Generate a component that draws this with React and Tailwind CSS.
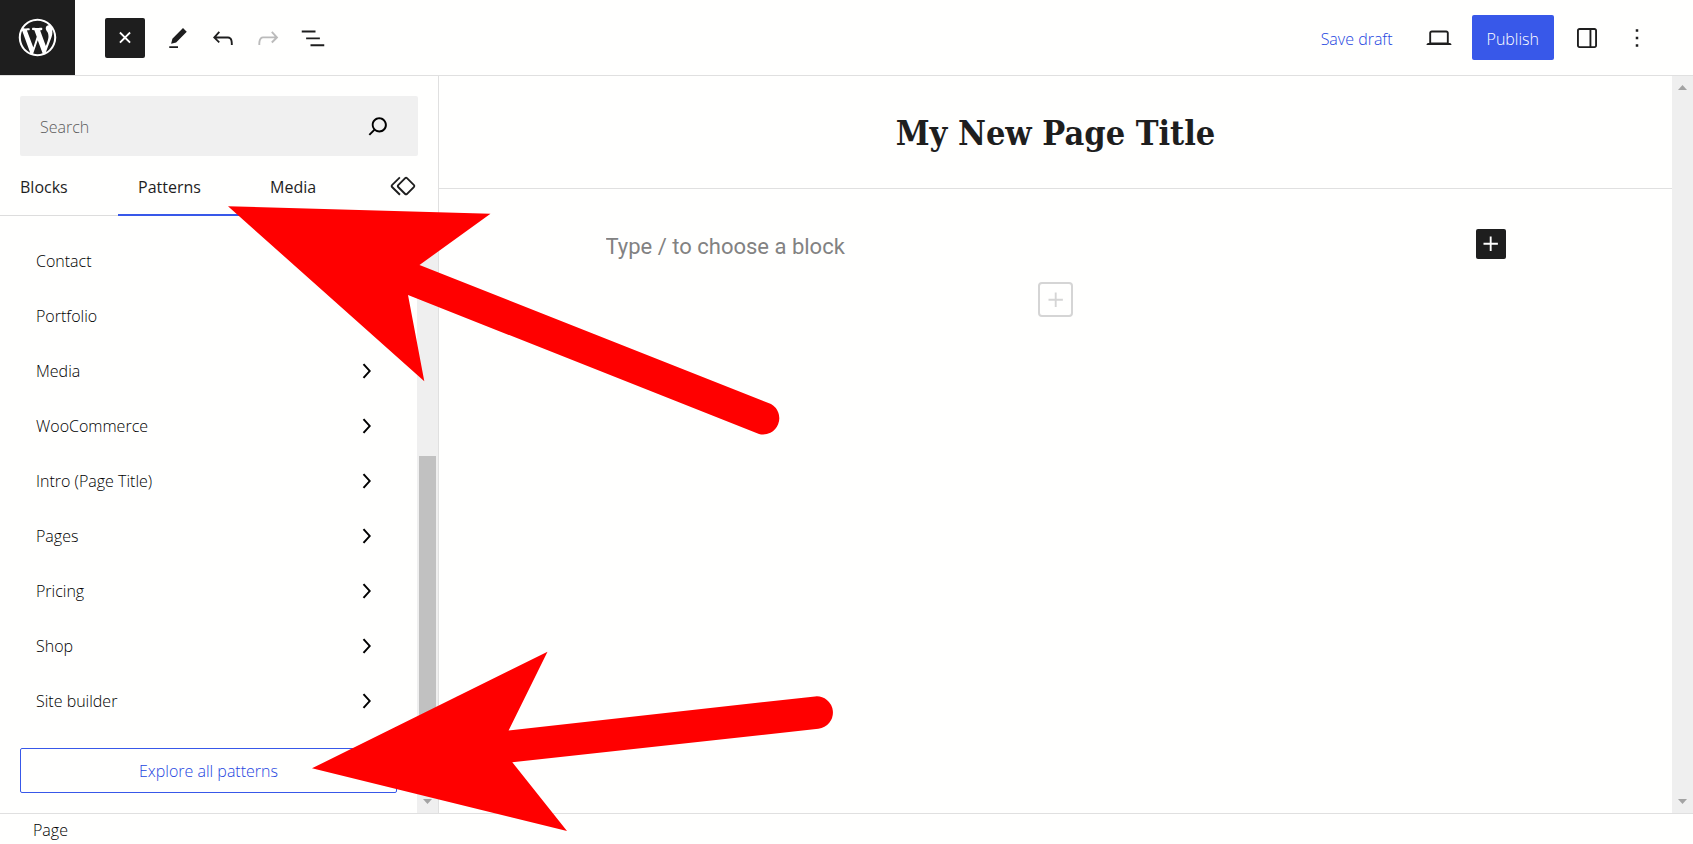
import React from "react";

const PATHS = {
  plus: "M11 12.5V17.5H12.5V12.5H17.5V11H12.5V6H11V11H6V12.5H11Z",
  pencil: "m19 7-3-3-8.5 8.5-1 4 4-1L19 7Zm-7 11.5H5V20h7v-1.5Z",
  undo: "M18.3 11.7c-.6-.6-1.4-.9-2.3-.9H6.7l2.9-3.3-1.1-1-4.5 5L8.5 16l1-1-2.7-2.7H16c.5 0 .9.2 1.3.5 1 1 1 3.4 1 4.5v.3h1.5v-.2c0-1.5 0-4.3-1.5-5.7z",
  redo: "M15.6 6.5l-1.1 1 2.9 3.3H8c-.9 0-1.7.3-2.3.9-1.4 1.5-1.4 4.2-1.4 5.6v.2h1.5v-.3c0-1.1 0-3.5 1-4.5.3-.3.7-.5 1.3-.5h9.2L14.5 15l1.1 1.1 4.6-4.6-4.6-5z",
  listView: "M3 6h11v1.5H3V6Zm3.5 5.5h11V13h-11v-1.5ZM21 17H10v1.5h11V17Z",
  search: "M13 5c-3.3 0-6 2.7-6 6 0 1.4.5 2.7 1.3 3.7l-3.8 3.8 1.1 1.1 3.8-3.8c1 .8 2.3 1.3 3.7 1.3 3.3 0 6-2.7 6-6S16.3 5 13 5zm0 10.5c-2.5 0-4.5-2-4.5-4.5s2-4.5 4.5-4.5 4.5 2 4.5 4.5-2 4.5-4.5 4.5z",
  symbol: "M21.3 10.8l-5.6-5.6c-.7-.7-1.8-.7-2.5 0l-5.6 5.6c-.7.7-.7 1.8 0 2.5l5.6 5.6c.3.3.8.5 1.2.5s.9-.2 1.2-.5l5.6-5.6c.8-.7.8-1.9.1-2.5zm-1 1.4l-5.6 5.6c-.1.1-.3.1-.4 0l-5.6-5.6c-.1-.1-.1-.3 0-.4l5.6-5.6s.1-.1.2-.1.1 0 .2.1l5.6 5.6c.1.1.1.3 0 .4zm-16.6-.4L10 5.5l-1-1-6.3 6.3c-.7.7-.7 1.8 0 2.5L9 19.5l1.1-1.1-6.3-6.3c-.2 0-.2-.2-.1-.3z",
  laptop: "M20.5 16h-.7V8c0-1.1-.9-2-2-2H6.2c-1.1 0-2 .9-2 2v8h-.7c-.8 0-1.5.7-1.5 1.5h20c0-.8-.7-1.5-1.5-1.5zM5.7 8c0-.3.2-.5.5-.5h11.6c.3 0 .5.2.5.5v7.6H5.7V8z",
  drawer: "M18 4H6c-1.1 0-2 .9-2 2v12c0 1.1.9 2 2 2h12c1.1 0 2-.9 2-2V6c0-1.1-.9-2-2-2zm-4 14.5H6c-.3 0-.5-.2-.5-.5V6c0-.3.2-.5.5-.5h8v13zm4.5-.5c0 .3-.2.5-.5.5h-2.5v-13H18c.3 0 .5.2.5.5v12z",
  more: "M13 19h-2v-2h2v2zm0-6h-2v-2h2v2zm0-6h-2V5h2v2z",
  chevron: "M10.6 6L9.4 7l4.6 5-4.6 5 1.2 1 5.4-6z",
  wordpress: "M20 10c0-5.51-4.49-10-10-10C4.48 0 0 4.49 0 10c0 5.52 4.48 10 10 10 5.51 0 10-4.48 10-10zM7.78 15.37L4.37 6.22c.55-.02 1.17-.08 1.17-.08.5-.06.44-1.13-.06-1.11 0 0-1.45.11-2.37.11-.18 0-.37 0-.58-.01C4.12 2.69 6.87 1.11 10 1.11c2.33 0 4.45.87 6.05 2.34-.68-.11-1.65.39-1.65 1.58 0 .74.45 1.36.9 2.1.35.61.55 1.36.55 2.46 0 1.49-1.4 5-1.4 5l-3.03-8.37c.54-.02.82-.17.82-.17.5-.05.44-1.25-.06-1.22 0 0-1.44.12-2.38.12-.87 0-2.33-.12-2.33-.12-.5-.03-.56 1.2-.06 1.22l.92.08 1.26 3.41zM17.41 10c.24-.64.74-1.87.43-4.25.7 1.29 1.05 2.71 1.05 4.25 0 3.29-1.73 6.24-4.4 7.78.97-2.59 1.94-5.2 2.92-7.78zM6.1 18.09C3.12 16.65 1.11 13.53 1.11 10c0-1.3.23-2.48.72-3.59C3.25 10.3 4.67 14.2 6.1 18.09zm4.03-6.63l2.58 6.98c-.86.29-1.76.45-2.71.45-.79 0-1.57-.11-2.29-.33.81-2.38 1.62-4.74 2.42-7.1z",
};

function Icon({ name, className = "size-[30px]", viewBox = "0 0 24 24" }) {
  return (
    <svg viewBox={viewBox} fill="currentColor" aria-hidden="true" className={`shrink-0 ${className}`}>
      <path d={PATHS[name]} />
    </svg>
  );
}

function IconButton({ name, label, className = "w-[45px]", disabled = false }) {
  return (
    <button
      type="button"
      aria-label={label}
      disabled={disabled}
      className={`flex h-[45px] shrink-0 items-center justify-center disabled:text-[#bbbbbb] ${className}`}
    >
      <Icon name={name} />
    </button>
  );
}

function Header() {
  return (
    <header className="flex h-[76px] shrink-0 items-center justify-between border-b border-[#e0e0e0]">
      <div className="flex h-full items-center">
        <a href="#dashboard" aria-label="View Pages" className="flex size-[75px] items-center justify-center self-start bg-[#1e1e1e] text-white">
          <Icon name="wordpress" viewBox="-2 -2 24 24" className="size-[45px]" />
        </a>
        <button type="button" aria-label="Close block inserter" className="mr-[10px] ml-[30px] flex size-10 items-center justify-center rounded-[2px] bg-[#1e1e1e] text-white">
          <Icon name="plus" className="size-[30px] rotate-45" />
        </button>
        <IconButton name="pencil" label="Tools" />
        <IconButton name="undo" label="Undo" />
        <IconButton name="redo" label="Redo" disabled />
        <IconButton name="listView" label="Document overview" />
      </div>
      <div className="flex items-center gap-[10px] pr-[34px]">
        <button type="button" className="px-[14px] pt-[2px] text-base font-light text-[#2445e0]">Save draft</button>
        <IconButton name="laptop" label="Preview" />
        <button type="button" className="h-[45px] rounded-[2px] bg-[#3858e9] px-[15px] pt-[2px] text-base font-light text-white">Publish</button>
        <div className="flex items-center gap-[5px]">
          <IconButton name="drawer" label="Settings" />
          <IconButton name="more" label="Options" />
        </div>
      </div>
    </header>
  );
}

function ScrollArrow({ up = false }) {
  return (
    <svg viewBox="0 0 9 5" aria-hidden="true" className="h-[5px] w-[9px]" fill="#a3a3a3">
      <path d={up ? "M4.5 0L9 5H0z" : "M0 0h9L4.5 5z"} />
    </svg>
  );
}

function ScrollTrack({ children }) {
  return (
    <div aria-hidden="true" className="flex w-[21px] shrink-0 flex-col items-center justify-between bg-[#efefef] py-[9px]">
      <ScrollArrow up />
      {children}
      <ScrollArrow />
    </div>
  );
}

const CATEGORIES = [
  { label: "Contact", nested: false },
  { label: "Portfolio", nested: false },
  { label: "Media", nested: true },
  { label: "WooCommerce", nested: true },
  { label: "Intro (Page Title)", nested: true },
  { label: "Pages", nested: true },
  { label: "Pricing", nested: true },
  { label: "Shop", nested: true },
  { label: "Site builder", nested: true },
];

function Inserter() {
  return (
    <aside className="flex w-[439px] shrink-0 flex-col border-r border-[#e0e0e0]">
      <div className="px-5 pt-5">
        <div className="flex h-[60px] items-center rounded-[2px] bg-[#f0f0f0] pr-[25px] pl-5">
          <input type="text" aria-label="Search for blocks and patterns" placeholder="Search" className="h-full min-w-0 flex-1 bg-transparent pt-[2px] text-base font-light outline-none placeholder:text-[#5c5c5c]" />
          <button type="button" aria-label="Search" className="text-black">
            <Icon name="search" />
          </button>
        </div>
      </div>
      <div role="tablist" className="flex h-[60px] shrink-0 border-b border-[#dddddd] text-base">
        <button type="button" role="tab" aria-selected="false" className="-mb-px w-[118px] border-b-2 border-transparent px-5 pt-1 text-left">Blocks</button>
        <button type="button" role="tab" aria-selected="true" className="-mb-px w-[132px] border-b-2 border-[#3858e9] px-5 pt-1 text-left">Patterns</button>
        <button type="button" role="tab" aria-selected="false" className="-mb-px w-[118px] border-b-2 border-transparent px-5 pt-1 text-left">Media</button>
        <button type="button" role="tab" aria-selected="false" aria-label="Synced patterns" className="flex flex-1 items-center justify-center">
          <Icon name="symbol" />
        </button>
      </div>
      <div className="flex min-h-0 flex-1">
        <div className="flex min-w-0 flex-1 flex-col gap-5 overflow-hidden pt-[17px] pr-5 pl-5">
          <ul>
            {CATEGORIES.map((c) => (
              <li key={c.label}>
                <button type="button" className="flex h-[55px] w-full items-center justify-between pr-4 pl-4 text-left text-base font-light text-black">
                  <span>{c.label}</span>
                  {c.nested && <Icon name="chevron" />}
                </button>
              </li>
            ))}
          </ul>
          <button type="button" className="h-[45px] shrink-0 rounded-[2px] border border-[#3858e9] text-base font-light text-[#2445e0]">
            Explore all patterns
          </button>
        </div>
        <ScrollTrack>
          <div className="mt-auto mb-3 h-[331px] w-[17px] bg-[#c1c1c1]" />
        </ScrollTrack>
      </div>
    </aside>
  );
}

function Canvas() {
  return (
    <main className="flex min-w-0 flex-1">
      <div className="flex min-w-0 flex-1 flex-col">
        <div className="flex h-[113px] items-center justify-center border-b border-[#e0e0e0] pt-[2px]">
          <h1 className="font-['DejaVu_Serif_Condensed','DejaVu_Serif',serif] text-[34px] leading-10 font-bold">My New Page Title</h1>
        </div>
        <div className="mx-auto flex w-full max-w-[900px] flex-col items-center pt-10">
          <div className="flex w-full items-start justify-between">
            <input type="text" aria-label="Empty block" placeholder="Type / to choose a block" className="h-[34px] min-w-0 flex-1 bg-transparent font-[Roboto,sans-serif] text-[22px] outline-none placeholder:text-[#828282]" />
            <button type="button" aria-label="Add block" className="flex size-[30px] items-center justify-center rounded-[2px] bg-[#1e1e1e] text-white">
              <Icon name="plus" />
            </button>
          </div>
          <button type="button" aria-label="Append block" className="mt-[19px] flex size-[35px] items-center justify-center rounded-[4px] border-2 border-[#d5d5d5] text-[#d5d5d5]">
            <Icon name="plus" />
          </button>
        </div>
      </div>
      <ScrollTrack />
    </main>
  );
}

function Pointers() {
  return (
    <svg aria-hidden="true" width="860" height="844" viewBox="0 0 860 844" fill="#ff0000" className="pointer-events-none absolute top-0 left-0">
      <path d="M228 206.3L490.5 213.7L419.5 265L771 404A16.3 16.3 0 0 1 759 434L408 295L424.3 381.2Z" />
      <path d="M312 768.3L547.5 651.7L508.6 730.4L815 696.4A16.2 16.2 0 0 1 818.4 728.7L512.3 762.3L567 831Z" />
    </svg>
  );
}

export default function App() {
  return (
    <div className="relative flex h-screen flex-col overflow-hidden bg-[#fffffe] font-['Open_Sans','Noto_Sans',sans-serif] text-[#1e1e1e]">
      <Header />
      <div className="flex min-h-0 flex-1">
        <Inserter />
        <Canvas />
      </div>
      <footer className="flex h-[31px] shrink-0 items-center border-t border-[#e0e0e0] px-[33px] pt-[2px] text-base font-light text-black">Page</footer>
      <Pointers />
    </div>
  );
}
